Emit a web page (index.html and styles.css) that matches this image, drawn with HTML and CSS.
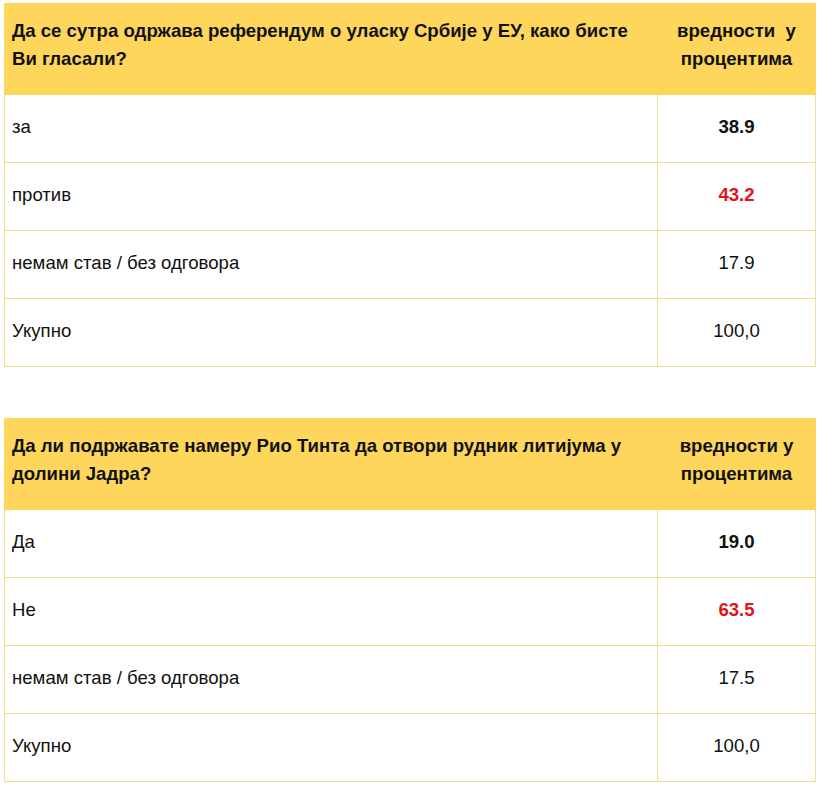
FILE: index.html
```html
<!DOCTYPE html>
<html lang="sr">
<head>
<meta charset="utf-8">
<link rel="stylesheet" href="styles.css">
</head>
<body>
<div class="page">
  <table class="poll">
    <thead>
      <tr>
        <th class="q">Да се сутра одржава референдум о уласку Србије у ЕУ, како бисте Ви гласали?</th>
        <th class="v">вредности &nbsp;у процентима</th>
      </tr>
    </thead>
    <tbody>
      <tr><td class="q">за</td><td class="v strong">38.9</td></tr>
      <tr><td class="q">против</td><td class="v strong red">43.2</td></tr>
      <tr><td class="q">немам став / без одговора</td><td class="v">17.9</td></tr>
      <tr><td class="q">Укупно</td><td class="v">100,0</td></tr>
    </tbody>
  </table>
  <table class="poll">
    <thead>
      <tr>
        <th class="q">Да ли подржавате намеру Рио Тинта да отвори рудник литијума у долини Јадра?</th>
        <th class="v">вредности у процентима</th>
      </tr>
    </thead>
    <tbody>
      <tr><td class="q">Да</td><td class="v strong">19.0</td></tr>
      <tr><td class="q">Не</td><td class="v strong red">63.5</td></tr>
      <tr><td class="q">немам став / без одговора</td><td class="v">17.5</td></tr>
      <tr><td class="q">Укупно</td><td class="v">100,0</td></tr>
    </tbody>
  </table>
</div>
</body>
</html>
```

FILE: styles.css
```css
html, body {
  margin: 0;
  padding: 0;
  background: #ffffff;
}

.page {
  padding: 3px 5px 0 4px;
  display: flex;
  flex-direction: column;
  gap: 51px;
  font-family: "Liberation Sans", Arial, sans-serif;
  color: #111111;
}

.poll {
  width: 812px;
  border-collapse: collapse;
  table-layout: fixed;
  font-size: 18.6px;
}

.poll th {
  background: #fdd65b;
  border: 1px solid #fdd65b;
  font-weight: bold;
  height: 91px;
  box-sizing: border-box;
  line-height: 28px;
  padding: 0 7px 9px 7px;
  vertical-align: middle;
}

.poll th.q {
  text-align: left;
  width: 653px;
}

.poll th.v {
  text-align: center;
}

.poll td {
  border: 1px solid #f0df8c;
  height: 68px;
  box-sizing: border-box;
  padding: 0 7px 4px 7px;
  vertical-align: middle;
}

.poll td.q {
  text-align: left;
}

.poll td.v {
  text-align: center;
}

.strong {
  font-weight: bold;
}

.red {
  color: #e0141b;
}
```
